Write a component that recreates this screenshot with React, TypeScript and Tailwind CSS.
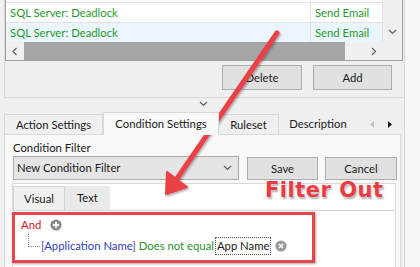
import React from 'react'

function Chevron({ dir, className = '' }: { dir: 'down' | 'left' | 'right'; className?: string }) {
  const pts = dir === 'down' ? '1,1 4.5,4.5 8,1' : dir === 'left' ? '4.5,1 1,4.5 4.5,8' : '1,1 4.5,4.5 1,8'
  const size = dir === 'down' ? { w: 9, h: 6 } : { w: 6, h: 9 }
  return (
    <svg width={size.w} height={size.h} viewBox={`0 0 ${size.w} ${size.h}`} className={className}>
      <polyline points={pts} fill="none" stroke="#606060" strokeWidth="1.2" />
    </svg>
  )
}

function WinButton({ label, className = '' }: { label: string; className?: string }) {
  return (
    <div
      className={`flex items-center justify-center bg-[#e1e1e1] border border-[#adadad] text-[#1a1a1a] ${className}`}
    >
      {label}
    </div>
  )
}

function CircleIcon({ kind }: { kind: 'plus' | 'x' }) {
  return (
    <svg width="12" height="12" viewBox="0 0 12 12">
      <circle cx="6" cy="6" r="5.6" fill={kind === 'plus' ? '#8c8c8c' : '#9a9a9a'} />
      {kind === 'plus' ? (
        <path d="M6 3v6M3 6h6" stroke="#fff" strokeWidth="1.8" />
      ) : (
        <path d="M4 4l4 4M8 4l-4 4" stroke="#fff" strokeWidth="1.6" />
      )}
    </svg>
  )
}

export default function App() {
  return (
    <div className="relative flex w-[420px] h-[267px] overflow-hidden bg-[#f0f0f0] text-[11.3px] leading-[14px] text-[#1a1a1a] [font-family:Lato,'Liberation_Sans',sans-serif]">
      {/* main column */}
      <div className="w-[405px] shrink-0 pl-[4px] border-r border-[#d6d6d6] flex flex-col">
        {/* rule grid panel */}
        <div className="h-[98px] shrink-0 border-l border-b border-[#d9d9d9]">
          <div className="w-[398px] h-[61px] border-x border-b border-[#a0a0a0] flex bg-white">
            <div className="w-[377px] flex flex-col">
              <div className="h-[3px] flex">
                <div className="w-[305px] border-r border-b border-[#e3e3e3]" />
                <div className="w-[72px] border-r border-b border-[#e3e3e3]" />
              </div>
              <div className="h-[20px] flex text-[#1f9a2a]">
                <div className="w-[305px] border-r border-b border-[#e3e3e3] pl-[4px] flex items-center">
                  SQL Server: Deadlock
                </div>
                <div className="w-[72px] border-r border-b border-[#e3e3e3] pl-[4px] flex items-center">
                  Send Email
                </div>
              </div>
              <div className="h-[19px] flex text-[#1f9a2a] bg-[#ebf5fd]">
                <div className="w-[305px] border-r border-[#e3e3e3] pl-[4px] flex items-center">
                  SQL Server: Deadlock
                </div>
                <div className="w-[72px] border-r border-[#e3e3e3] pl-[4px] flex items-center">
                  Send Email
                </div>
              </div>
              <div className="h-[18px] flex bg-[#f0f0f0]">
                <div className="w-[18px] flex items-center justify-center">
                  <Chevron dir="left" />
                </div>
                <div className="w-[321px] bg-[#a6a6a6]" />
                <div className="w-[20px]" />
                <div className="w-[18px] flex items-center justify-center">
                  <Chevron dir="right" />
                </div>
              </div>
            </div>
            <div className="w-[19px] bg-[#f0f0f0] flex flex-col items-center pt-[29px]">
              <Chevron dir="down" />
            </div>
          </div>
          <div className="flex gap-[11px] pl-[217px] pt-[4px]">
            <WinButton label="Delete" className="w-[80px] h-[25px]" />
            <WinButton label="Add" className="w-[79px] h-[25px]" />
          </div>
        </div>

        {/* splitter */}
        <div className="h-[14px] shrink-0 flex items-start pl-[195px] pt-[3px]">
          <Chevron dir="down" />
        </div>

        {/* settings tabs */}
        <div className="flex flex-col">
          <div className="h-[22px] flex items-end relative">
            <div className="w-[99px] h-[20px] border border-b-0 border-[#d9d9d9] flex items-center justify-center">
              Action Settings
            </div>
            <div className="w-[116px] h-[23px] -mb-px relative z-10 border border-b-0 border-[#d9d9d9] bg-[#f9f9f9] flex items-center justify-center">
              Condition Settings
            </div>
            <div className="w-[60px] h-[20px] border border-b-0 border-l-0 border-[#d9d9d9] flex items-center justify-center">
              Ruleset
            </div>
            <div className="w-[78px] h-[20px] flex items-center justify-center">Description</div>
            <div className="flex items-center gap-[14px] ml-[13px] h-[20px]">
              <svg width="4" height="7" viewBox="0 0 4 7">
                <polygon points="4,0 0,3.5 4,7" fill="#c4c4c4" />
              </svg>
              <svg width="4" height="7" viewBox="0 0 4 7">
                <polygon points="0,0 4,3.5 0,7" fill="#1a1a1a" />
              </svg>
            </div>
          </div>
          <div className="w-[397px] h-[140px] border border-[#d9d9d9] bg-[#f9f9f9] pl-[8px] pt-[6px]">
            <div className="h-[14px]">Condition Filter</div>
            <div className="flex items-start mt-[1px]">
              <div className="w-[226px] h-[24px] border border-[#acacac] bg-[#e5e5e5] flex items-center justify-between pl-[3px] pr-[6px]">
                <span>New Condition Filter</span>
                <Chevron dir="down" />
              </div>
              <WinButton label="Save" className="ml-[8px] mt-[1px] w-[71px] h-[23px]" />
              <WinButton label="Cancel" className="ml-[7px] mt-[1px] w-[72px] h-[23px]" />
            </div>

            {/* condition editor */}
            <div className="mt-[3px] -ml-[1px] w-[384px] h-[100px] border border-[#d9d9d9] bg-white">
              <div className="h-[27px] flex items-end border-b border-[#d4d4d4]">
                <div className="w-[52px] h-[24px] bg-[#f0f0f0] border border-b-0 border-[#d4d4d4] flex items-center justify-center">
                  Visual
                </div>
                <div className="w-[45px] h-[24px] bg-[#eaeaea] flex items-center justify-center">Text</div>
              </div>
              <div className="pl-[8px] pt-[6px]">
                <div className="h-[16px] flex items-center gap-[9px]">
                  <span className="text-[#d6141f]">And</span>
                  <CircleIcon kind="plus" />
                </div>
                <div className="h-[20px] mt-[3px] flex items-center">
                  <div className="self-start -mt-[3px] ml-[7px] w-[12px] h-[14px] border-l border-b border-dotted border-[#8a8a8a]" />
                  <span className="ml-px text-[#3340b5]">[Application Name]</span>
                  <span className="ml-[3px] text-[#2a932a]">Does not equal</span>
                  <span className="ml-px px-px h-[18px] flex items-center border border-dotted border-[#555]">
                    App Name
                  </span>
                  <span className="ml-[4px] flex">
                    <CircleIcon kind="x" />
                  </span>
                </div>
              </div>
            </div>
          </div>
        </div>
      </div>
      <div className="flex-1 bg-[#f8f8f8]" />

      {/* annotation */}
      <div className="absolute left-[12px] top-[212px] w-[303px] h-[51px] border-[3px] border-[#e8444a] shadow-[1px_1px_2px_rgba(0,0,0,0.35)]" />
      <div className="absolute left-[265px] top-[177px] text-[21px] leading-[26px] font-bold tracking-[0.5px] text-[#ec3b42] [font-family:'DejaVu_Sans',sans-serif] [text-shadow:0_0_2px_#fff,1px_2px_2px_rgba(0,0,0,0.35)]">
        Filter Out
      </div>
      <svg className="absolute left-0 top-0 pointer-events-none" width="420" height="267" viewBox="0 0 420 267">
        <defs>
          <filter id="sh" x="-20%" y="-20%" width="140%" height="140%">
            <feDropShadow dx="1" dy="1.5" stdDeviation="1.2" floodColor="#000" floodOpacity="0.35" />
          </filter>
        </defs>
        <g filter="url(#sh)">
          <line x1="277" y1="33" x2="176" y2="180" stroke="#ec4047" strokeWidth="5" strokeLinecap="round" />
          <polygon points="166,194 167,172 187,187" fill="#ec4047" stroke="#ec4047" strokeWidth="2" strokeLinejoin="round" />
        </g>
      </svg>
    </div>
  )
}
